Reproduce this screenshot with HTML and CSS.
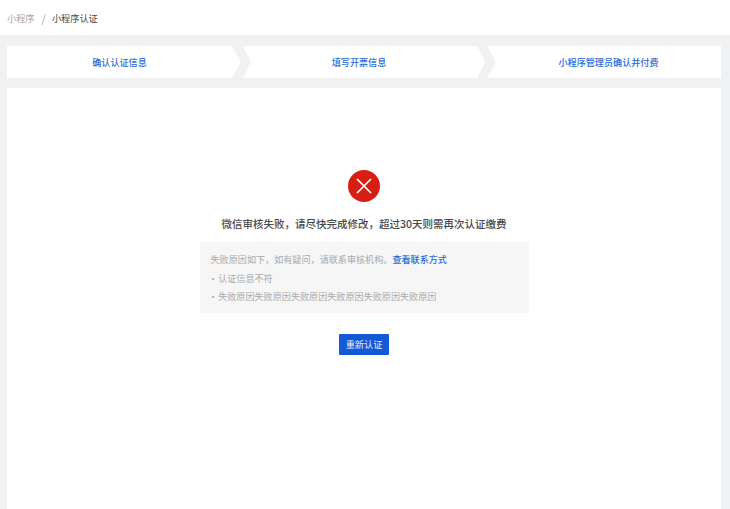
FILE: index.html
```html
<!DOCTYPE html>
<html lang="zh-CN">
<head>
  <meta charset="UTF-8" />
  <meta name="viewport" content="width=device-width, initial-scale=1.0" />
  <title>小程序认证</title>
  <link rel="stylesheet" href="styles.css">
</head>
<body>
  <header class="breadcrumb">
    <span class="crumb-parent">小程序</span>
    <span class="crumb-sep">/</span>
    <span class="crumb-current">小程序认证</span>
  </header>

  <main class="content">
    <div class="steps">
      <div class="step step-first">确认认证信息</div>
      <div class="step step-middle">填写开票信息</div>
      <div class="step step-last">小程序管理员确认并付费</div>
    </div>

    <section class="result">
      <svg class="result-icon" width="32" height="32" viewBox="0 0 32 32">
        <circle cx="16" cy="16" r="16" fill="#d81e12" />
        <path d="M9 9 L23 23 M23 9 L9 23" stroke="#fff" stroke-width="1.7" fill="none" />
      </svg>
      <h2 class="result-title">微信审核失败，请尽快完成修改，超过30天则需再次认证缴费</h2>
      <div class="reason">
        <p>失败原因如下，如有疑问，请联系审核机构。<a href="#" class="reason-link">查看联系方式</a></p>
        <p class="reason-item">· 认证信息不符</p>
        <p class="reason-item">· 失败原因失败原因失败原因失败原因失败原因失败原因</p>
      </div>
      <button class="retry-btn">重新认证</button>
    </section>
  </main>
</body>
</html>
```

FILE: styles.css
```css
html, body {
  height: 100%;
}
body {
  margin: 0;
  height: 509px;
  overflow: hidden;
  background-color: #f0f1f3;
  font-family: "Noto Sans CJK SC", "Liberation Sans", sans-serif;
  display: flex;
  flex-direction: column;
}
.breadcrumb {
  height: 35px;
  flex: none;
  background-color: #fff;
  display: flex;
  align-items: center;
  padding-left: 7px;
  font-size: 9.2px;
}
.crumb-parent {
  color: #a6a6a6;
}
.crumb-sep {
  color: #a6a6a6;
  font-size: 11px;
  margin: 0 6px 0 7px;
}
.crumb-current {
  color: #444;
}
.content {
  flex: 1;
  display: flex;
  flex-direction: column;
  gap: 10px;
  padding: 11px 9px 0 7px;
}
.steps {
  display: grid;
  grid-template-columns: 234px 242px 234px;
  gap: 2px;
}
.step {
  height: 32px;
  background-color: #fff;
  color: #2a6ad8;
  font-size: 9.1px;
  font-weight: 500;
  display: flex;
  align-items: center;
  justify-content: center;
}
.step-first {
  padding-right: 9px;
  box-sizing: border-box;
  clip-path: polygon(0 0, 225px 0, 234px 50%, 225px 100%, 0 100%);
}
.step-middle {
  padding-right: 10px;
  box-sizing: border-box;
  clip-path: polygon(0 0, 234px 0, 242px 50%, 234px 100%, 0 100%, 8px 50%);
}
.step-last {
  padding-left: 9px;
  box-sizing: border-box;
  clip-path: polygon(0 0, 100% 0, 100% 100%, 0 100%, 9px 50%);
}
.result {
  flex: 1;
  background-color: #fff;
  display: flex;
  flex-direction: column;
  align-items: center;
  padding-top: 82px;
}
.result-title {
  margin: 14px 0 0;
  font-size: 10.5px;
  line-height: 16px;
  font-weight: 500;
  color: #484848;
}
.reason {
  width: 329px;
  box-sizing: border-box;
  margin-top: 10px;
  padding: 8px 10px 7px 11px;
  background-color: #f6f6f6;
  font-size: 9.1px;
  color: #a9a9a9;
}
.reason p {
  margin: 0;
  line-height: 18.5px;
}
.reason-item {
  margin-left: -2px !important;
  word-spacing: -1.5px;
}
.reason-link {
  color: #2a6ad8;
  font-weight: 500;
  text-decoration: none;
}
.retry-btn {
  margin-top: 21px;
  width: 50px;
  height: 21px;
  padding: 0;
  border: none;
  border-radius: 1px;
  background-color: #1259d6;
  color: #e8eefb;
  font-family: inherit;
  font-size: 9.2px;
}
```
